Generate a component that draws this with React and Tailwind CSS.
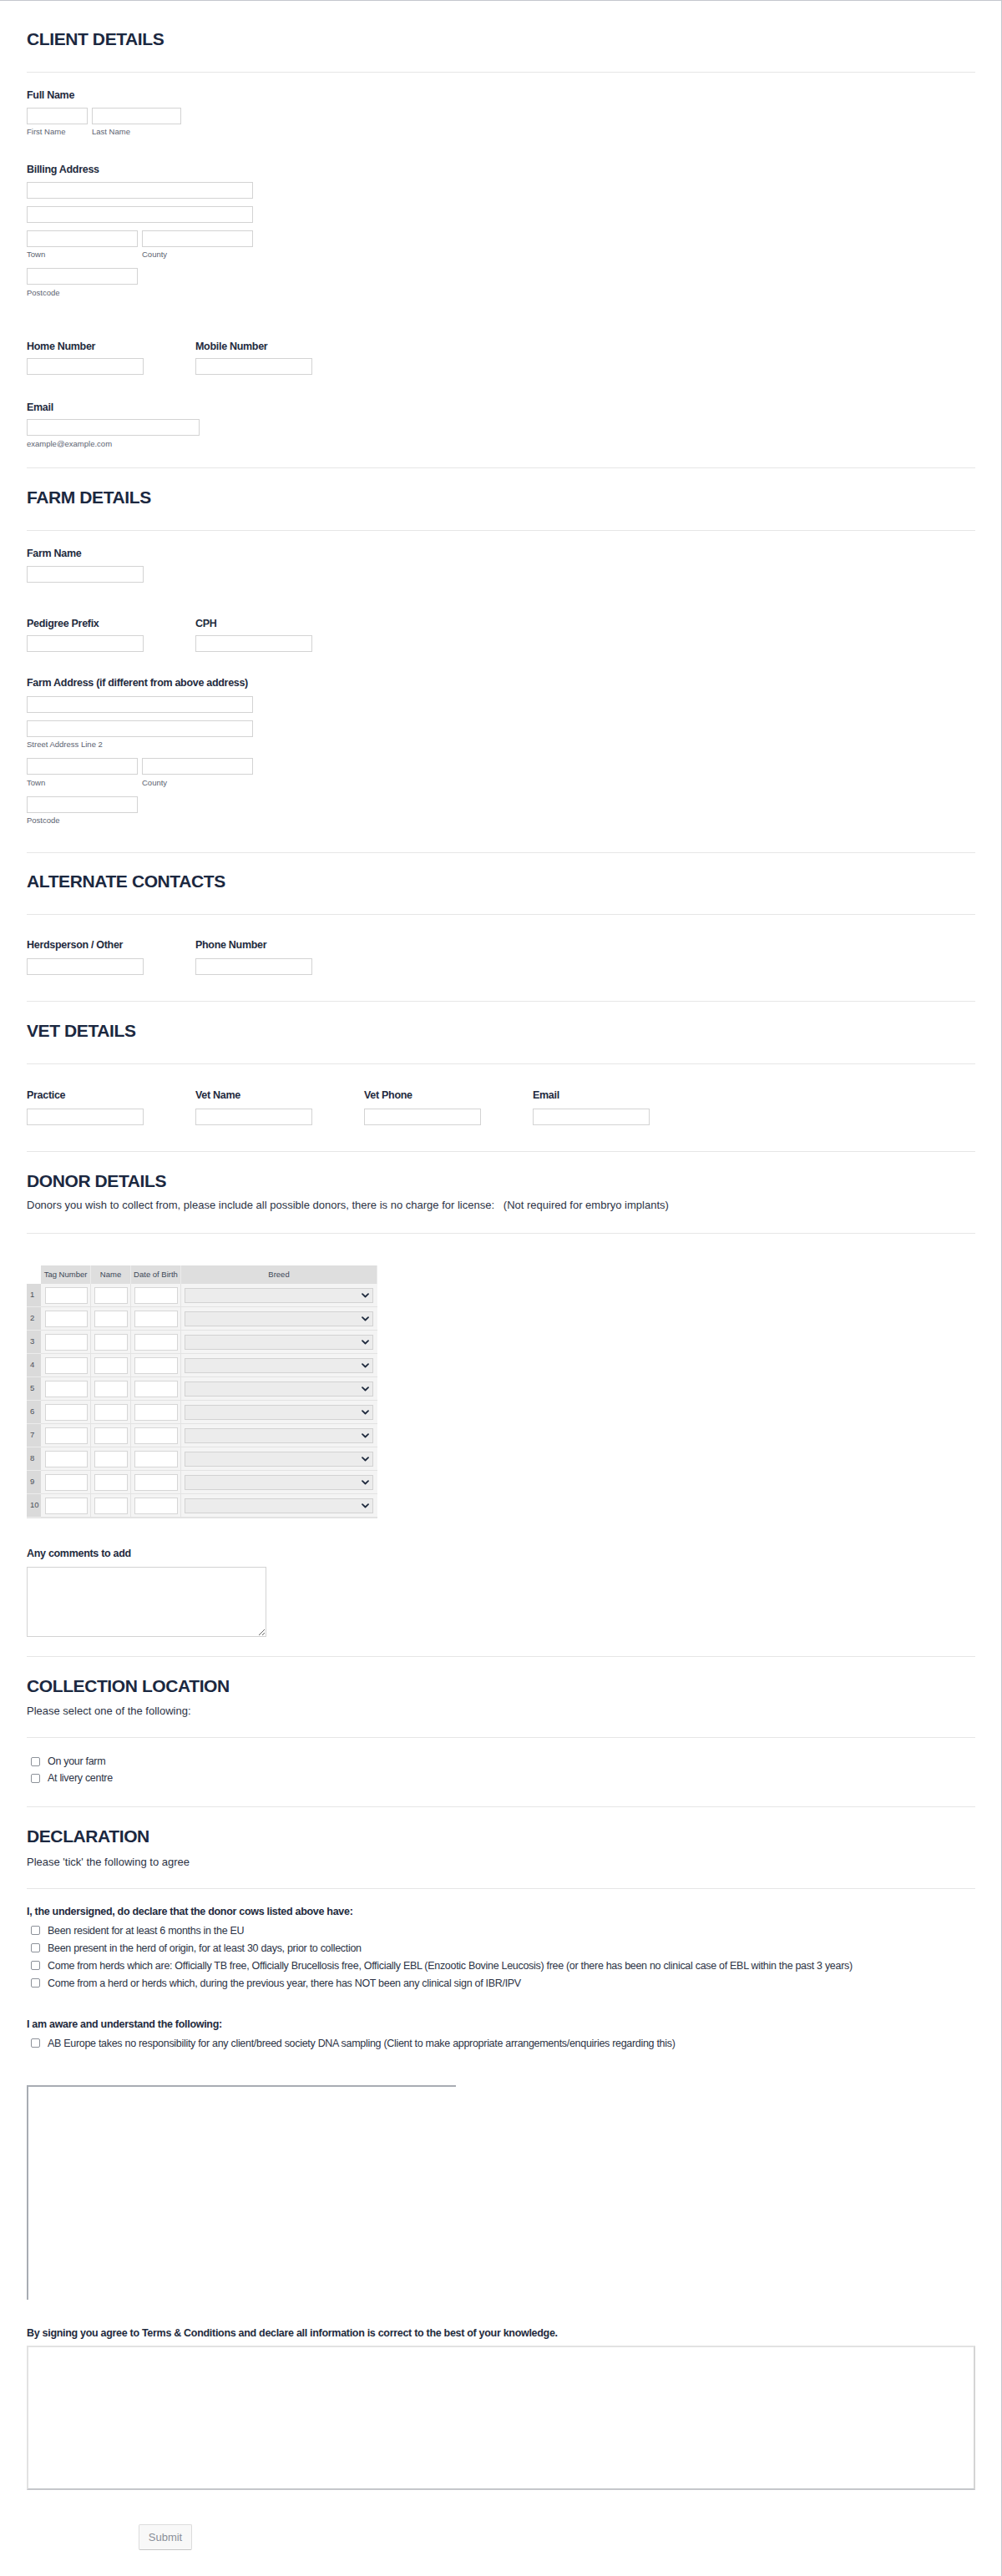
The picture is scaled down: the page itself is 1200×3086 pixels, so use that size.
import React from 'react';

const H = ({ children, className = '' }) => (
  <h2 className={`text-[21px] leading-[24px] font-bold tracking-[-0.4px] text-[#1b2840] ${className}`}>{children}</h2>
);
const Hr = ({ className = '' }) => <div className={`border-t border-[#e6e6e6] ${className}`} />;
const Label = ({ children, className = '' }) => (
  <div className={`text-[12.5px] leading-[14px] font-bold tracking-[-0.3px] text-[#1f2b3e] ${className}`}>{children}</div>
);
const Sub = ({ children, className = '' }) => (
  <div className={`text-[9.5px] leading-[12px] text-[#5b6270] ${className}`}>{children}</div>
);
const Input = ({ className = '' }) => (
  <input type="text" className={`block h-[20px] border border-[#d3d3d3] bg-white ${className}`} />
);
const SubText = ({ children, className = '' }) => (
  <p className={`text-[13px] leading-[16px] text-[#2c3345] ${className}`}>{children}</p>
);
const Check = ({ children, className = '' }) => (
  <div className={`flex items-center gap-[9px] pl-[5px] text-[12.5px] leading-[14px] tracking-[-0.3px] text-[#2c3345] ${className}`}>
    <span className="block h-[11px] w-[11px] shrink-0 rounded-[2px] border border-[#8d929a] bg-white" />
    <span>{children}</span>
  </div>
);

const Chevron = () => (
  <svg width="9" height="6" viewBox="0 0 9 6" className="block">
    <path d="M1 1.2 L4.5 4.5 L8 1.2" fill="none" stroke="#1f2b3e" strokeWidth="1.8" strokeLinecap="round" strokeLinejoin="round" />
  </svg>
);

const rows = [1, 2, 3, 4, 5, 6, 7, 8, 9, 10];

export default function App() {
  return (
    <div className="min-h-[3086px] w-[1200px] border-t border-r border-[#c4c7cd] bg-white font-['Liberation_Sans',Arial,sans-serif]">
      <div className="pl-8 pr-[31px] pt-[34px] pb-[31px]">
        {/* CLIENT DETAILS */}
        <H>CLIENT DETAILS</H>
        <Hr className="mt-[27px]" />
        <Label className="mt-[20px]">Full Name</Label>
        <div className="mt-[8px] flex gap-[5px]">
          <div>
            <Input className="w-[73px]" />
            <Sub className="mt-[3px]">First Name</Sub>
          </div>
          <div>
            <Input className="w-[107px]" />
            <Sub className="mt-[3px]">Last Name</Sub>
          </div>
        </div>

        <Label className="mt-[32px]">Billing Address</Label>
        <Input className="mt-[8px] w-[271px]" />
        <Input className="mt-[9px] w-[271px]" />
        <div className="mt-[9px] flex gap-[5px]">
          <div>
            <Input className="w-[133px]" />
            <Sub className="mt-[3px]">Town</Sub>
          </div>
          <div>
            <Input className="w-[133px]" />
            <Sub className="mt-[3px]">County</Sub>
          </div>
        </div>
        <Input className="mt-[10px] w-[133px]" />
        <Sub className="mt-[4px]">Postcode</Sub>

        <div className="mt-[51px] flex">
          <div className="w-[202px]">
            <Label>Home Number</Label>
            <Input className="mt-[7px] w-[140px]" />
          </div>
          <div className="w-[202px]">
            <Label>Mobile Number</Label>
            <Input className="mt-[7px] w-[140px]" />
          </div>
        </div>

        <Label className="mt-[32px]">Email</Label>
        <Input className="mt-[7px] w-[207px]" />
        <Sub className="mt-[4px]">example@example.com</Sub>

        {/* FARM DETAILS */}
        <Hr className="mt-[22px]" />
        <H className="mt-[23px]">FARM DETAILS</H>
        <Hr className="mt-[27px]" />
        <Label className="mt-[20px]">Farm Name</Label>
        <Input className="mt-[8px] w-[140px]" />

        <div className="mt-[42px] flex">
          <div className="w-[202px]">
            <Label>Pedigree Prefix</Label>
            <Input className="mt-[7px] w-[140px]" />
          </div>
          <div className="w-[202px]">
            <Label>CPH</Label>
            <Input className="mt-[7px] w-[140px]" />
          </div>
        </div>

        <Label className="mt-[30px]">Farm Address (if different from above address)</Label>
        <Input className="mt-[9px] w-[271px]" />
        <Input className="mt-[9px] w-[271px]" />
        <Sub className="mt-[3px]">Street Address Line 2</Sub>
        <div className="mt-[10px] flex gap-[5px]">
          <div>
            <Input className="w-[133px]" />
            <Sub className="mt-[4px]">Town</Sub>
          </div>
          <div>
            <Input className="w-[133px]" />
            <Sub className="mt-[4px]">County</Sub>
          </div>
        </div>
        <Input className="mt-[10px] w-[133px]" />
        <Sub className="mt-[3px]">Postcode</Sub>

        {/* ALTERNATE CONTACTS */}
        <Hr className="mt-[32px]" />
        <H className="mt-[22px]">ALTERNATE CONTACTS</H>
        <Hr className="mt-[27px]" />
        <div className="mt-[29px] flex">
          <div className="w-[202px]">
            <Label>Herdsperson / Other</Label>
            <Input className="mt-[9px] w-[140px]" />
          </div>
          <div className="w-[202px]">
            <Label>Phone Number</Label>
            <Input className="mt-[9px] w-[140px]" />
          </div>
        </div>

        {/* VET DETAILS */}
        <Hr className="mt-[31px]" />
        <H className="mt-[23px]">VET DETAILS</H>
        <Hr className="mt-[27px]" />
        <div className="mt-[30px] flex">
          {['Practice', 'Vet Name', 'Vet Phone', 'Email'].map((l) => (
            <div key={l} className="w-[202px]">
              <Label>{l}</Label>
              <Input className="mt-[9px] w-[140px]" />
            </div>
          ))}
        </div>

        {/* DONOR DETAILS */}
        <Hr className="mt-[31px]" />
        <H className="mt-[23px]">DONOR DETAILS</H>
        <SubText className="mt-[9px]">
          Donors you wish to collect from, please include all possible donors, there is no charge for license:{'\u00a0\u00a0 '}(Not required for embryo implants)
        </SubText>
        <Hr className="mt-[25px]" />

        <div className="mt-[38px] w-[420px] border-b border-[#e2e2e2]">
          <div className="grid h-[22px] grid-cols-[17px_60px_48px_60px_235px]">
            <div />
            {['Tag Number', 'Name', 'Date of Birth', 'Breed'].map((h) => (
              <div
                key={h}
                className="flex items-center justify-center border-r border-[#ebebeb] bg-[#dedede] text-[9.5px] text-[#3c4757]"
              >
                {h}
              </div>
            ))}
          </div>
          {rows.map((n) => (
            <div key={n} className="grid h-[28px] grid-cols-[17px_60px_48px_60px_235px]">
              <div className="flex items-center border-b border-[#ececec] bg-[#dadada] pl-[4px] text-[9.5px] text-[#4a4f57]">
                {n}
              </div>
              <div className="flex items-center border-r border-b border-[#e3e3e3] bg-[#f4f4f4] pl-[5px]">
                <input type="text" className="block h-[20px] w-[51px] border border-[#d6d6d6] bg-white" />
              </div>
              <div className="flex items-center border-r border-b border-[#e3e3e3] bg-[#f4f4f4] pl-[4px]">
                <input type="text" className="block h-[20px] w-[40px] border border-[#d6d6d6] bg-white" />
              </div>
              <div className="flex items-center border-r border-b border-[#e3e3e3] bg-[#f4f4f4] pl-[4px]">
                <input type="text" className="block h-[20px] w-[52px] border border-[#d6d6d6] bg-white" />
              </div>
              <div className="flex items-center border-b border-[#e3e3e3] bg-[#f4f4f4] pl-[4px]">
                <div className="flex h-[18px] w-[226px] items-center justify-end border border-[#d2d2d2] bg-[#ececec] pr-[4px]">
                  <Chevron />
                </div>
              </div>
            </div>
          ))}
        </div>

        <Label className="mt-[35px]">Any comments to add</Label>
        <textarea className="mt-[9px] block h-[84px] w-[287px] border border-[#d3d3d3] bg-white" />

        {/* COLLECTION LOCATION */}
        <Hr className="mt-[23px]" />
        <H className="mt-[23px]">COLLECTION LOCATION</H>
        <SubText className="mt-[10px]">Please select one of the following:</SubText>
        <Hr className="mt-[23px]" />
        <div className="mt-[18px]">
          <Check className="h-[20px]">On your farm</Check>
          <Check className="h-[20px]">At livery centre</Check>
        </div>

        {/* DECLARATION */}
        <Hr className="mt-[24px]" />
        <H className="mt-[23px]">DECLARATION</H>
        <SubText className="mt-[11px]">Please 'tick' the following to agree</SubText>
        <Hr className="mt-[23px]" />
        <Label className="mt-[20px]">I, the undersigned, do declare that the donor cows listed above have:</Label>
        <div className="mt-[5px]">
          <Check className="h-[21px]">Been resident for at least 6 months in the EU</Check>
          <Check className="h-[21px]">Been present in the herd of origin, for at least 30 days, prior to collection</Check>
          <Check className="h-[21px]">
            Come from herds which are: Officially TB free, Officially Brucellosis free, Officially EBL (Enzootic Bovine Leucosis) free (or there has been no clinical case of EBL within the past 3 years)
          </Check>
          <Check className="h-[21px]">
            Come from a herd or herds which, during the previous year, there has NOT been any clinical sign of IBR/IPV
          </Check>
        </div>

        <Label className="mt-[32px]">I am aware and understand the following:</Label>
        <div className="mt-[5px]">
          <Check className="h-[21px]">
            AB Europe takes no responsibility for any client/breed society DNA sampling (Client to make appropriate arrangements/enquiries regarding this)
          </Check>
        </div>

        {/* Signature */}
        <div className="mt-[40px] h-[257px] w-[514px] border-t-2 border-l-2 border-[#a8acb3]" />

        <Label className="mt-[33px]">
          By signing you agree to Terms &amp; Conditions and declare all information is correct to the best of your knowledge.
        </Label>
        <div className="mt-[8px] h-[173px] w-full border-2 border-t-[#e2e2e2] border-l-[#e2e2e2] border-b-[#c5c7cb] border-r-[#d5d5d5]" />

        <button
          type="button"
          className="mt-[41px] ml-[134px] block h-[31px] w-[64px] rounded-[2px] border border-[#dcdcdc] border-b-[#c6c6c6] bg-[#f8f8f8] text-[13px] text-[#8a8f98]"
        >
          Submit
        </button>
      </div>
    </div>
  );
}
